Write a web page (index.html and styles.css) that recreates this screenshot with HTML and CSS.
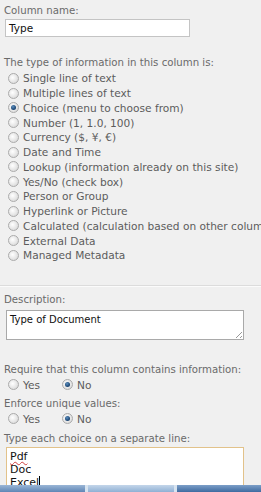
FILE: index.html
```html
<!DOCTYPE html>
<html>
<head>
<meta charset="utf-8">
<link rel="stylesheet" href="styles.css">
</head>
<body>
<div class="page">
  <div class="label first">Column name:</div>
  <div class="input">Type</div>

  <div class="label type-head">The type of information in this column is:</div>
  <div class="radios">
    <div class="row"><span class="radio"></span>Single line of text</div>
    <div class="row"><span class="radio"></span>Multiple lines of text</div>
    <div class="row"><span class="radio on"></span>Choice (menu to choose from)</div>
    <div class="row"><span class="radio"></span>Number (1, 1.0, 100)</div>
    <div class="row"><span class="radio"></span>Currency ($, ¥, €)</div>
    <div class="row"><span class="radio"></span>Date and Time</div>
    <div class="row"><span class="radio"></span>Lookup (information already on this site)</div>
    <div class="row"><span class="radio"></span>Yes/No (check box)</div>
    <div class="row"><span class="radio"></span>Person or Group</div>
    <div class="row"><span class="radio"></span>Hyperlink or Picture</div>
    <div class="row"><span class="radio"></span>Calculated (calculation based on other column</div>
    <div class="row"><span class="radio"></span>External Data</div>
    <div class="row"><span class="radio"></span>Managed Metadata</div>
  </div>

  <div class="sep"></div>

  <div class="label desc-head">Description:</div>
  <div class="textarea desc">Type of Document<span class="grip"></span></div>

  <div class="label req-head">Require that this column contains information:</div>
  <div class="yesno"><span class="opt"><span class="radio"></span>Yes</span><span class="opt"><span class="radio on"></span>No</span></div>
  <div class="label enf-head">Enforce unique values:</div>
  <div class="yesno"><span class="opt"><span class="radio"></span>Yes</span><span class="opt"><span class="radio on"></span>No</span></div>
  <div class="label choice-head">Type each choice on a separate line:</div>
  <div class="textarea choices"><span class="spell">Pdf</span><br>Doc<br>Excel<span class="caret"></span></div>
</div>
<div class="taskbar"><span class="tb a"></span><span class="tb b"></span><span class="tb c"></span></div>
</body>
</html>
```
FILE: styles.css
```css
html, body { margin: 0; padding: 0; }
body {
  background: #f0f0f0;
  font-family: "DejaVu Sans", Verdana, sans-serif;
  font-size: 10.2px;
  color: #6a6a6a;
  width: 261px;
  height: 492px;
  overflow: hidden;
  position: relative;
}
.page { padding: 0 0 0 4px; }
.label { line-height: 15px; white-space: nowrap; }
.first { padding-top: 3px; }
.input {
  margin: 1px 0 0 1px;
  width: 180px;
  height: 16px;
  border: 1px solid #c4c4c4;
  background: #fff;
  color: #111;
  font-size: 10.5px;
  line-height: 16px;
  padding-left: 3px;
}
.type-head { margin-top: 18px; }
.radios { margin-top: 1px; }
.row {
  display: flex;
  align-items: center;
  height: 14.75px;
  white-space: nowrap;
  padding-left: 4px;
  font-size: 10.6px;
  color: #5c5c5c;
  overflow: hidden;
}
.radio {
  flex: none;
  display: inline-block;
  width: 9px;
  height: 9px;
  border-radius: 50%;
  border: 1px solid #ababab;
  background: radial-gradient(circle at 40% 40%, #ffffff 0, #e6e6e6 55%, #cfcfcf 100%);
  margin-right: 4px;
  position: relative;
}
.radio.on::after {
  content: "";
  position: absolute;
  left: 2px; top: 2px;
  width: 5px; height: 5px;
  border-radius: 50%;
  background: radial-gradient(circle at 40% 35%, #5d8fbf 0, #1f4a78 60%, #0f2f55 100%);
}
.sep {
  margin-top: 22px;
  margin-left: -4px;
  height: 1px;
  background: #dcdcdc;
  border-bottom: 1px solid #fbfbfb;
}
.desc-head { margin-top: 5px; }
.textarea {
  margin: 3px 0 0 2px;
  width: 230px;
  border: 1px solid #a9a9a9;
  background: #fff;
  color: #111;
  font-size: 10px;
  padding: 2px 3px;
  position: relative;
  line-height: 13px;
}
.desc { height: 24px; }
.grip {
  position: absolute;
  right: 1px; bottom: 1px;
  width: 6px; height: 6px;
  background: linear-gradient(135deg, transparent 45%, #999 45%, #999 55%, transparent 55%, transparent 75%, #999 75%, #999 85%, transparent 85%);
}
.req-head { margin-top: 22px; }
.yesno { display: flex; height: 16px; align-items: center; padding-left: 4px; color: #5c5c5c; font-size: 10.6px; }
.opt { display: inline-flex; align-items: center; width: 54px; }
.enf-head { margin-top: 3px; }
.choice-head { margin-top: 4px; }
.choices {
  margin-top: 1px;
  border-color: #e2c28a;
  font-size: 11px;
  height: 60px;
  padding-top: 2px;
}
.spell { text-decoration: underline wavy #d04040; text-decoration-thickness: 1px; text-underline-offset: 1px; }
.caret { display: inline-block; width: 1px; height: 12px; background: #000; vertical-align: -2px; }
.taskbar {
  position: absolute;
  left: 0; right: 0; bottom: 0;
  height: 7px;
  display: flex;
  background: #2d5a92;
}
.tb { height: 7px; border-right: 3px solid #d8e4f0; }
.tb.a { width: 85px; background: linear-gradient(#9ab6d6, #5f86b6); }
.tb.b { width: 86px; background: linear-gradient(#c4d6ea, #8fb0d4); }
.tb.c { flex: 1; border-right: none; background: linear-gradient(#7c9fc8, #3e6aa0); }
```
